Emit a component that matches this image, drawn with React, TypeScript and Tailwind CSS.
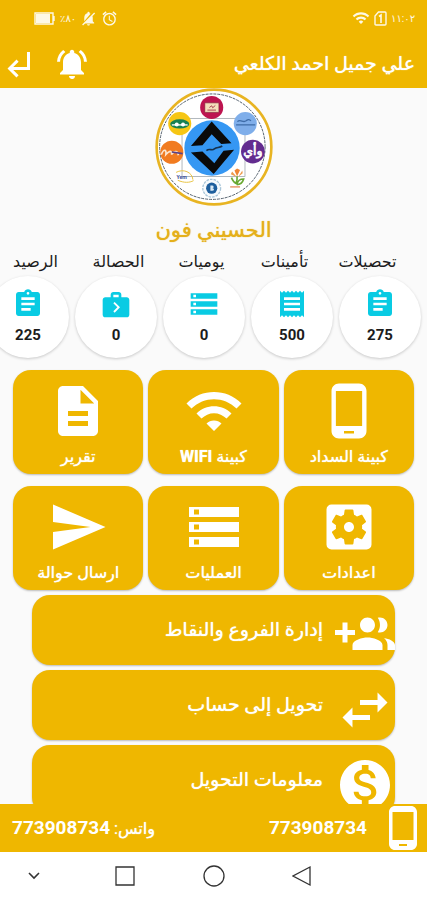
import React from 'react';
import {
  MdAccessAlarm,
  MdAssignment,
  MdDescription,
  MdMonetizationOn,
  MdNextWeek,
  MdNotificationsActive,
  MdPhoneAndroid,
  MdReceipt,
  MdSend,
  MdSettingsApplications,
  MdStorage,
  MdSubdirectoryArrowLeft,
  MdSwapHoriz,
  MdWifi,
} from 'react-icons/md';

interface Item {
  label: string;
  latin?: string;
  icon: React.ReactNode;
}

interface Stat extends Item {
  value: number;
}

const stats: Stat[] = [
  { label: 'تحصيلات', value: 275, icon: <MdAssignment size={32} /> },
  { label: 'تأمينات', value: 500, icon: <MdReceipt size={32} /> },
  { label: 'يوميات', value: 0, icon: <MdStorage size={32} /> },
  { label: 'الحصالة', value: 0, icon: <MdNextWeek size={32} /> },
  { label: 'الرصيد', value: 225, icon: <MdAssignment size={32} /> },
];

const tiles: Item[] = [
  { label: 'كبينة السداد', icon: <MdPhoneAndroid size={60} /> },
  { label: 'كبينة', latin: 'WIFI', icon: <MdWifi size={60} /> },
  { label: 'تقرير', icon: <MdDescription size={60} /> },
  { label: 'اعدادات', icon: <MdSettingsApplications size={60} /> },
  { label: 'العمليات', icon: <MdStorage size={60} /> },
  { label: 'ارسال حوالة', icon: <MdSend size={60} /> },
];

const rows: Item[] = [
  { label: 'إدارة الفروع والنقاط', icon: <GroupAddIcon /> },
  { label: 'تحويل إلى حساب', icon: <MdSwapHoriz size={60} /> },
  { label: 'معلومات التحويل', icon: <MdMonetizationOn size={60} /> },
];

function GroupAddIcon() {
  return (
    <svg width="60" height="60" viewBox="0 0 24 24" fill="currentColor" aria-hidden="true">
      <path d="M8 10H5V7H3v3H0v2h3v3h2v-3h3v-2zm10 1c1.66 0 2.99-1.34 2.99-3S19.66 5 18 5c-.32 0-.63.05-.91.14.57.81.9 1.79.9 2.86s-.34 2.04-.9 2.86c.28.09.59.14.91.14zm-5 0c1.66 0 2.99-1.34 2.99-3S14.66 5 13 5c-1.66 0-3 1.34-3 3s1.34 3 3 3zm6.62 2.16c.83.73 1.38 1.66 1.38 2.84v2h3v-2c0-1.54-2.37-2.49-4.38-2.84zM13 13c-2 0-6 1-6 3v2h12v-2c0-2-4-3-6-3z" />
    </svg>
  );
}

const Logo = () => (
  <svg className="size-[118px]" viewBox="44 10 358 358" role="img" aria-label="الحسيني فون">
    <circle cx="223" cy="189" r="174" fill="#fff" stroke="#e8b422" strokeWidth="8" />
    <circle cx="218" cy="188" r="160" fill="none" stroke="#53606c" strokeWidth="3" strokeDasharray="9 3" />
    <rect x="126" y="102" width="191" height="176" fill="none" stroke="#8b949c" strokeWidth="2" />
    <circle cx="217" cy="192" r="84" fill="#3597f3" />
    <path d="M216 112l60 66-31 2-29-30-28 34-35 2z" fill="#0a0a0a" />
    <path d="M153 206l35-3 36 35 28-38 32-3-62 74z" fill="#0a0a0a" />
    <path d="M200 200c10-9 16 2 24-5s14-2 24-9" stroke="#16324f" strokeWidth="5" fill="none" />

    <circle cx="216" cy="69" r="35" fill="#bd1550" />
    <rect x="195" y="55" width="43" height="29" rx="2" fill="#f4dfbb" stroke="#7d1c34" strokeWidth="2" />
    <path d="M203 77h26M209 69l7-5 3 6 8-7" stroke="#a94452" strokeWidth="3" fill="none" />

    <circle cx="119" cy="118" r="35" fill="#f6c614" />
    <ellipse cx="119" cy="119" rx="29" ry="14" fill="#168052" />
    <circle cx="110" cy="121" r="6" fill="#fff" />
    <circle cx="129" cy="121" r="6" fill="#fff" />
    <path d="M95 122h48" stroke="#fff" strokeWidth="4" />

    <circle cx="318" cy="118" r="35" fill="#7faeea" />
    <path d="M294 112c10-10 17 6 27-3 6-5 10-4 14 1M290 122h58" stroke="#3e6ca8" strokeWidth="4" fill="none" />

    <circle cx="95" cy="205" r="35" fill="#f17b20" />
    <path d="M63 212c9-21 16-13 14 0 12-14 19-12 17 0 11-15 19-10 21 2" stroke="#fbe5cf" strokeWidth="5" fill="none" />
    <path d="M95 204l33 5" stroke="#59428a" strokeWidth="5" />

    <circle cx="341" cy="203" r="36" fill="#632c8f" />
    <text x="341" y="213" fontSize="38" textAnchor="middle" fill="#fff" stroke="#fff" strokeWidth="2">وأي</text>

    <path d="M108 266c22-12 49-1 51 22M113 290c19 8 35 8 48 1" stroke="#e8c343" strokeWidth="3" fill="none" />
    <text x="125" y="285" fontSize="16" fontWeight="bold" textAnchor="middle" fill="#41539a">Yem</text>

    <circle cx="216" cy="314" r="27" fill="#f7fafc" stroke="#a9c6d9" strokeWidth="4" strokeDasharray="8 3" />
    <circle cx="216" cy="314" r="17" fill="#1e5f9d" />
    <path d="M212 306h5q5 0 5 4t-5 4q6 0 6 4t-6 4h-5z" fill="#dcebf5" />

    <path d="M293 278l-8-18 8-6 9 5z" fill="#ef8533" />
    <path d="M292 280l-18-8 4-9zM296 280l14-11-1-9z" fill="#ee9b4c" />
    <path d="M293 278c1 8 0 15-4 22M276 282c4 11 9 16 17 19 2-10 9-15 20-15-3 10-10 17-21 17" stroke="#69a832" strokeWidth="5" fill="none" />
    <path d="M272 310h30" stroke="#eba37a" strokeWidth="5" />
  </svg>
);

const StatusBar = () => (
  <div dir="ltr" className="flex h-9 items-center justify-between pl-[34px] pr-3 text-[10px] text-white/90">
    <div className="flex items-center gap-1">
      <svg width="22" height="13" viewBox="0 0 22 13" fill="none" aria-hidden="true">
        <path d="M1 1h18v11H1zM20 4v5" stroke="currentColor" strokeWidth="1.4" />
        <path d="M2 2h14v9H2z" fill="currentColor" />
      </svg>
      <span>٪٨٠</span>
      {/* muted bell, the slash runs from bottom left to top right */}
      <svg width="17" height="17" viewBox="0 0 24 24" fill="currentColor" className="-scale-x-100" aria-hidden="true">
        <path d="M12 22c1.1 0 2-.9 2-2h-4c0 1.1.9 2 2 2zM18 16v-5c0-3.1-1.600-5.600-4.500-6.300V4a1.500 1.500 0 0 0-3 0v.7c-.5.1-1 .3-1.400.6zM6.800 7.600C6.300 8.600 6 9.700 6 11v5l-2 2v1h13.700zM4 3.500L2.700 4.800l17 17 1.300-1.300z" />
      </svg>
      <MdAccessAlarm size={17} />
    </div>
    <div className="flex items-center gap-1">
      <MdWifi size={18} />
      <svg width="13" height="15" viewBox="0 0 13 15" fill="none" stroke="currentColor" aria-hidden="true">
        <path d="M4.500 1H11q1 0 1 1v11q0 1-1 1H2q-1 0-1-1V5z" strokeWidth="1.400" />
        <path d="M5 5.500L7 4v8" strokeWidth="1.600" />
      </svg>
      <span>١١:٠٢</span>
    </div>
  </div>
);

const AppHeader = () => (
  <header className="flex h-[52px] items-center justify-between pt-1 pr-3 text-white">
    <h1 className="text-[19px] [text-shadow:0_0_1px_#fff]">علي جميل احمد الكلعي</h1>
    <div className="flex flex-row-reverse items-center gap-[18px]">
      <button aria-label="رجوع">
        <MdSubdirectoryArrowLeft size={36} />
      </button>
      <button aria-label="الإشعارات">
        <MdNotificationsActive size={36} />
      </button>
    </div>
  </header>
);

const StatsStrip = () => (
  <section className="overflow-hidden">
    <div className="flex pr-[18px] text-base leading-6">
      {stats.map((stat) => (
        <span key={stat.label} className="w-[83px] shrink-0 text-center">
          {stat.label}
        </span>
      ))}
    </div>
    <div className="flex gap-1.5 px-1.5 pt-0.5 pb-3">
      {stats.map((stat) => (
        <div
          key={stat.label}
          className="flex size-[82px] shrink-0 flex-col items-center rounded-full bg-white pt-3 shadow-[0_1px_3px_rgba(0,0,0,0.2)]"
        >
          <span className="text-[#09cbe3]">{stat.icon}</span>
          <span className="font-[Roboto] text-[15px] leading-[30px] font-bold text-[#1c1c1c]">{stat.value}</span>
        </div>
      ))}
    </div>
  </section>
);

const NavBar = () => (
  <nav dir="ltr" className="flex h-12 shrink-0 items-center bg-white text-[#333]">
    <button aria-label="إخفاء" className="flex w-[68px] justify-center">
      <svg width="14" height="10" viewBox="0 0 14 10" fill="none" stroke="currentColor" strokeWidth="1.600">
        <path d="M2 2l5 5 5-5" />
      </svg>
    </button>
    <button aria-label="التطبيقات" className="ml-3 flex w-[90px] justify-center">
      <svg width="20" height="20" viewBox="0 0 20 20" fill="none" stroke="currentColor" strokeWidth="1.300">
        <path d="M1 1h18v18H1z" />
      </svg>
    </button>
    <button aria-label="الرئيسية" className="flex w-[88px] justify-center">
      <svg width="22" height="22" viewBox="0 0 22 22" fill="none" stroke="currentColor" strokeWidth="1.300">
        <circle cx="11" cy="11" r="10" />
      </svg>
    </button>
    <button aria-label="السابق" className="flex w-[88px] justify-center">
      <svg width="20" height="22" viewBox="0 0 20 22" fill="none" stroke="currentColor" strokeWidth="1.300">
        <path d="M18 2v18L1 11z" />
      </svg>
    </button>
  </nav>
);

export default function App() {
  return (
    <div
      dir="rtl"
      className="flex h-screen flex-col overflow-hidden bg-[#fafafa] font-[Roboto,'DejaVu_Sans',sans-serif] text-[#1c1c1c]"
    >
      <div className="shrink-0 bg-[#efb700]">
        <StatusBar />
        <AppHeader />
      </div>

      <main className="min-h-0 flex-1 overflow-hidden">
        <div className="flex flex-col items-center">
          <Logo />
          <h2 className="pt-1 text-[21px] leading-10 text-[#e5b01b] [text-shadow:0_0_1px_#e5b01b]">الحسيني فون</h2>
        </div>

        <StatsStrip />

        <section className="grid grid-cols-3 gap-x-[5px] gap-y-3 px-[13px]">
          {tiles.map((tile) => (
            <button
              key={tile.label}
              className="flex h-[104px] flex-col items-center rounded-[18px] bg-[#efb700] pt-[11px] text-white shadow-[0_1px_2px_rgba(0,0,0,0.25)]"
            >
              {tile.icon}
              <span className="text-base leading-8 [text-shadow:0_0_1px_#fff]">
                {tile.label}
                {tile.latin && <b> {tile.latin}</b>}
              </span>
            </button>
          ))}
        </section>

        <section className="flex flex-col gap-[5px] px-8 pt-[5px]">
          {rows.map((row) => (
            <button
              key={row.label}
              className="flex h-[70px] w-full gap-3 rounded-[18px] bg-[#efb700] text-white shadow-[0_1px_2px_rgba(0,0,0,0.25)]"
            >
              <span className="self-end">{row.icon}</span>
              <span className="self-center text-[19px] [text-shadow:0_0_1px_#fff]">{row.label}</span>
            </button>
          ))}
        </section>
      </main>

      <footer className="flex h-12 shrink-0 items-center bg-[#efb700] text-[19px] text-white">
        <MdPhoneAndroid size={48} />
        <a href="tel:773908734" className="mr-3 font-bold">
          773908734
        </a>
        <a href="https://wa.me/773908734" className="mr-auto ml-3">
          <span className="text-base [text-shadow:0_0_1px_#fff]">واتس: </span>
          <b>773908734</b>
        </a>
      </footer>

      <NavBar />
    </div>
  );
}
